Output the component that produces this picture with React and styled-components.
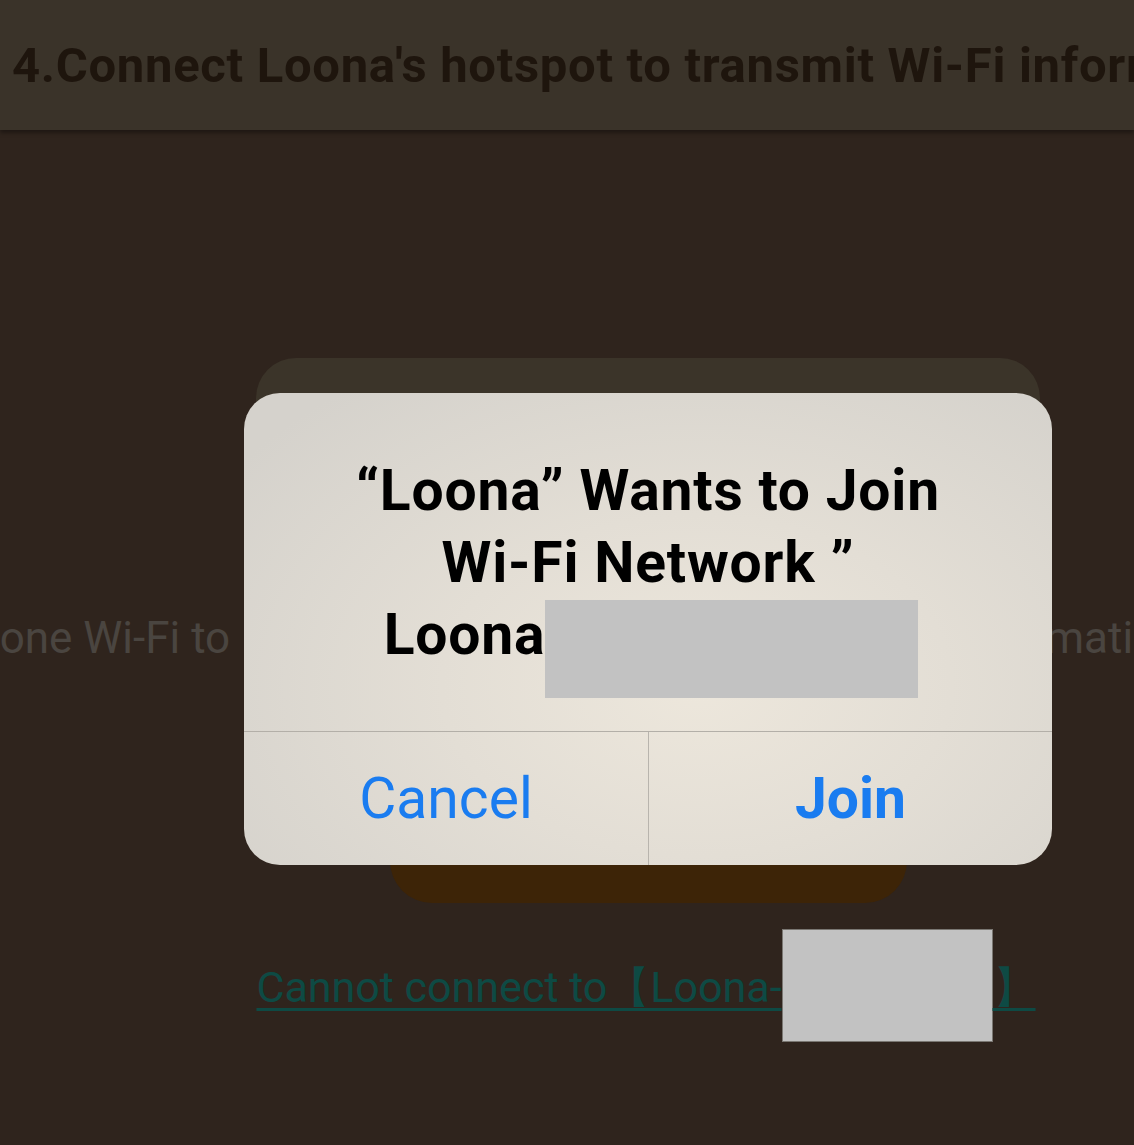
import React from "react";
import styled, { createGlobalStyle } from "styled-components";

const Global = createGlobalStyle`
  html, body {
    margin: 0;
    padding: 0;
    background: #2f241d;
    overflow: hidden;
  }
  body {
    font-family: Roboto, "Liberation Sans", sans-serif;
  }
`;

export default function App() {
  return (
    <>
      <Global />
      <Page>
        <Header>
          <h1>4.Connect Loona's hotspot to transmit Wi-Fi information</h1>
        </Header>
        <Body>
          <Card />
          <Hint>
            Please switch phone Wi-Fi to Loona's hotspot to transmit network information
          </Hint>
          <ConnectButton />
          <HelpLink href="#">
            Cannot connect to【Loona-<Redact $w={211} $h={113} $drop={40} $border />】
          </HelpLink>
        </Body>
        <Alert>
          <AlertText>
            <Title>
              “Loona” Wants to Join
              <br />
              Wi-Fi Network ”
            </Title>
            <Network>
              Loona<Redact $w={373} $h={98} $drop={44} />
            </Network>
          </AlertText>
          <Actions>
            <Action>Cancel</Action>
            <Action $primary>Join</Action>
          </Actions>
        </Alert>
      </Page>
    </>
  );
}

const Page = styled.div`
  position: relative;
  width: 1134px;
  height: 1145px;
  overflow: hidden;
  background: #2f241d;
`;

const Header = styled.header`
  height: 130px;
  background: #3a3329;
  box-shadow: 0 3px 4px rgba(0, 0, 0, 0.35);
  display: flex;
  align-items: center;
  padding-left: 12px;
  overflow: hidden;
  white-space: nowrap;
  h1 {
    margin: 0;
    font-family: Roboto, "Liberation Sans", sans-serif;
    font-weight: 700;
    font-size: 49px;
    letter-spacing: 0.7px;
    color: #1e150d;
  }
`;

/* the page column sits 81px right of the window centre */
const Body = styled.main`
  display: flex;
  flex-direction: column;
  align-items: center;
  padding: 228px 0 0 162px;
`;

const Card = styled.div`
  width: 784px;
  height: 240px;
  background: #3b3429;
  border-radius: 40px 40px 0 0;
`;

const Hint = styled.p`
  align-self: flex-start;
  margin: 14px 0 0 -493px;
  white-space: nowrap;
  font-size: 44px;
  line-height: 52px;
  color: #4a4540;
`;

const ConnectButton = styled.div`
  width: 517px;
  height: 140px;
  margin-top: 99px;
  background: #3d2407;
  border-radius: 42px;
`;

const HelpLink = styled.a`
  margin: 26px 0 0 -4px;
  font-size: 43px;
  color: #0e4a44;
  text-decoration: underline;
  text-decoration-thickness: 3px;
  text-underline-offset: 6px;
  white-space: nowrap;
`;

const Redact = styled.span`
  display: inline-block;
  width: ${(p) => p.$w}px;
  height: ${(p) => p.$h}px;
  vertical-align: -${(p) => p.$drop}px;
  background: #c2c2c2;
  box-sizing: border-box;
  border: ${(p) => (p.$border ? "1px solid #7a7772" : "none")};
`;

const Alert = styled.div`
  position: absolute;
  left: 244px;
  top: 393px;
  width: 808px;
  height: 472px;
  border-radius: 36px;
  overflow: hidden;
  display: flex;
  flex-direction: column;
  background: radial-gradient(
    ellipse 70% 80% at 56% 62%,
    #ede7dc 0%,
    #e3ded5 45%,
    #d5d2cc 100%
  );
`;

const AlertText = styled.div`
  flex: 1;
  padding-top: 62px;
  text-align: center;
  color: #000;
`;

const Title = styled.h2`
  margin: 0;
  font-family: Roboto, "Liberation Sans", sans-serif;
  font-weight: 700;
  font-size: 57px;
  letter-spacing: 0.8px;
  line-height: 72px;
`;

const Network = styled.div`
  font-weight: 700;
  font-size: 57px;
  letter-spacing: 0.8px;
  line-height: 72px;
  padding-left: 6px;
`;

const Actions = styled.div`
  height: 133px;
  display: grid;
  grid-template-columns: 404px 1fr;
  border-top: 1px solid #b3afa8;
`;

const Action = styled.div`
  display: flex;
  align-items: center;
  justify-content: center;
  font-size: 57px;
  font-weight: ${(p) => (p.$primary ? 700 : 400)};
  color: #1a7cf0;
  & + & {
    border-left: 1px solid #b8b4ad;
  }
`;
